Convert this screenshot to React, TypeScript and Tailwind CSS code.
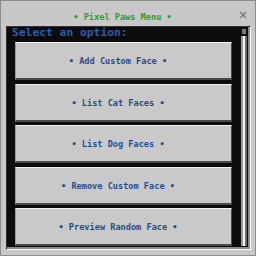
const OPTIONS = [
  'Add Custom Face',
  'List Cat Faces',
  'List Dog Faces',
  'Remove Custom Face',
  'Preview Random Face',
]

export default function App() {
  return (
    <div className="w-[256px] h-[256px] overflow-hidden bg-[#c8c8c8] border border-[#8c8c8c] flex flex-col font-['DejaVu_Sans_Mono',monospace]">
      {/* Title bar */}
      <div className="relative h-[25px] shrink-0 flex items-end justify-center pr-[11px] pb-[3px]">
        <span className="text-[8.6px] leading-[12px] font-bold text-[#1fa31f] whitespace-pre">
          • Pixel Paws Menu •
        </span>
        <span className="absolute right-[7px] top-[7px] text-[12px] leading-[14px] text-[#6a6a6a] font-['DejaVu_Sans',sans-serif]">
          ×
        </span>
      </div>

      {/* Panel */}
      <div className="flex-1 ml-[5px] mr-[4px] mb-[5px] flex border-t border-l border-[#303030] border-b border-r border-b-white border-r-white">
        <div className="flex-1 flex bg-[#0c0c0c] border-b-2 border-r-2 border-[#8a8a8a] min-h-0">
          <div className="flex-1 flex flex-col overflow-hidden min-w-0">
            <div className="pl-[5px] -mt-[1px] text-[11.3px] leading-[14px] font-bold text-[#2b5cae] whitespace-pre">
              Select an option:
            </div>
            <div className="flex flex-col gap-[3.5px] mt-[2px] pl-[8px] pr-[9px]">
              {OPTIONS.map((o) => (
                <button
                  key={o}
                  type="button"
                  className="h-[38px] shrink-0 flex items-center justify-center pr-[11px] pt-[2px] bg-[#c9c9c9] border-t border-l border-t-[#f2f2f2] border-l-[#9a9a9a] border-b-2 border-r border-b-[#4a4a4a] border-r-[#4a4a4a] text-[8.6px] font-bold text-[#1f4e8e] whitespace-pre"
                >
                  • {o} •
                </button>
              ))}
            </div>
          </div>
          {/* Scrollbar */}
          <div className="w-[6px] mr-[1px] mt-[2px] mb-[1px] flex flex-col">
            <div className="h-[5px] mx-[1px] bg-[#7a7a7a]" />
            <div className="flex-1 mt-[2px] flex">
              <div className="w-[2px] bg-[#9c9c9c]" />
              <div className="w-[2px] bg-[#f4f4f4]" />
              <div className="w-[2px] bg-[#6c6c6c]" />
            </div>
          </div>
        </div>
      </div>
    </div>
  )
}
